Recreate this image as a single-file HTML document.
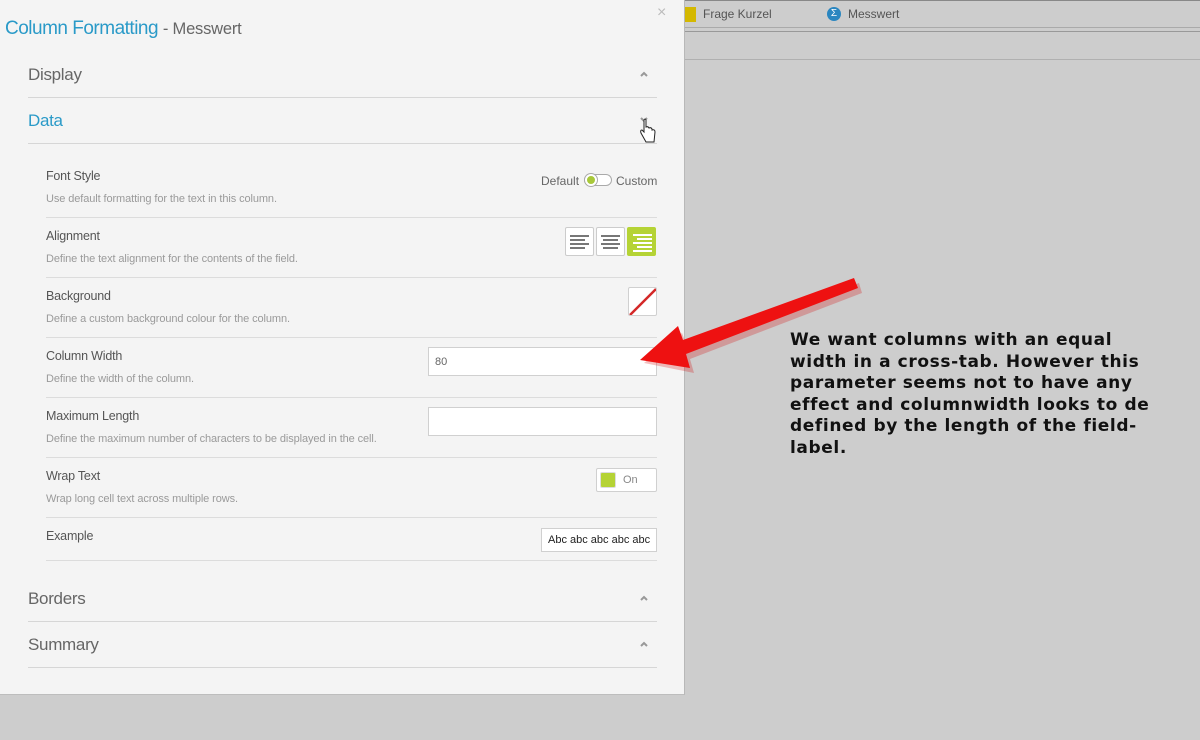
<!DOCTYPE html>
<html><head><meta charset="utf-8"><style>
*{margin:0;padding:0;box-sizing:border-box}
body{width:1200px;height:740px;background:#cdcdcd;position:relative;overflow:hidden;font-family:"Liberation Sans",sans-serif}
.a{position:absolute}
#panel{left:0;top:0;width:685px;height:695px;background:#f4f4f4;border-right:1px solid #b8b8b8;border-bottom:1px solid #bdbdbd}
.sec{position:absolute;left:28px;width:629px;font-size:17px;color:#666;letter-spacing:-0.3px}
.hl{position:absolute;left:28px;width:629px;height:1px;background:#d6d6d6}
.rl{position:absolute;left:46px;width:611px;height:1px;background:#dcdcdc}
.t{position:absolute;left:46px;font-size:12.5px;color:#555;letter-spacing:-0.2px}
.d{position:absolute;left:46px;font-size:11px;color:#9a9a9a;letter-spacing:-0.1px}
.car{position:absolute;left:639px;width:10px;height:8px}
.inp{position:absolute;background:#fff;border:1px solid #d0d0d0}
.al{position:absolute;top:227px;width:29px;height:29px;background:#fff;border:1px solid #ccc;border-radius:2px}
.al i{position:absolute;height:1.5px;background:#777}
</style></head><body>
<div class="a" style="left:685px;top:0;width:515px;height:1px;background:#888"></div>
<div class="a" style="left:685px;top:27px;width:515px;height:1px;background:#aaa"></div>
<div class="a" style="left:685px;top:31px;width:515px;height:1px;background:#999"></div>
<div class="a" style="left:685px;top:59px;width:515px;height:1px;background:#b0b0b0"></div>
<div class="a" style="left:685px;top:7px;width:11px;height:15px;background:#d4b800"></div>
<div class="a" style="left:703px;top:7px;font-size:12px;color:#555">Frage Kurzel</div>
<div class="a" style="left:827px;top:7px;width:14px;height:14px;border-radius:50%;background:#2a86c0;color:#fff;font-size:10px;text-align:center;line-height:14px">Σ</div>
<div class="a" style="left:848px;top:7px;font-size:12px;color:#555">Messwert</div>

<div id="panel" class="a">
<div class="a" style="left:657px;top:4px;font-size:16px;color:#bbb">×</div>
<div class="a" style="left:5px;top:18px;font-size:19px;color:#2a9ac8;letter-spacing:-0.5px">Column Formatting <span style="color:#666;font-size:16.5px;letter-spacing:-0.2px">- Messwert</span></div>
<div class="sec" style="top:65px">Display</div><svg class="car" style="top:70px"><path d="M2 6 L5 3 L8 6" fill="none" stroke="#999" stroke-width="2"/></svg>
<div class="hl" style="top:97px"></div>
<div class="sec" style="top:111px;color:#2a9ac8">Data</div><svg class="car" style="top:116px"><path d="M2 2 L5 5 L8 2" fill="none" stroke="#999" stroke-width="2"/></svg>
<div class="hl" style="top:143px"></div>

<div class="t" style="top:169px">Font Style</div><div class="d" style="top:193px">Use default formatting for the text in this column.</div>
<div class="a" style="left:541px;top:174px;font-size:12px;color:#666">Default</div>
<div class="a" style="left:584px;top:174px;width:28px;height:12px;border:1px solid #aaa;border-radius:6px;background:#fff"></div>
<div class="a" style="left:585px;top:174px;width:12px;height:12px;border-radius:50%;background:#a8c83a;border:2px solid #fff;box-shadow:0 0 0 1px #aaa"></div>
<div class="a" style="left:616px;top:174px;font-size:12px;color:#666">Custom</div>
<div class="rl" style="top:217px"></div>

<div class="t" style="top:229px">Alignment</div><div class="d" style="top:253px">Define the text alignment for the contents of the field.</div>
<div class="al" style="left:565px"><i style="left:4px;top:7px;width:19px"></i><i style="left:4px;top:11px;width:15px"></i><i style="left:4px;top:15px;width:19px"></i><i style="left:4px;top:19px;width:15px"></i></div>
<div class="al" style="left:596px"><i style="left:4px;top:7px;width:19px"></i><i style="left:6px;top:11px;width:15px"></i><i style="left:4px;top:15px;width:19px"></i><i style="left:6px;top:19px;width:15px"></i></div>
<div class="al" style="left:627px;background:#b5d335;border-color:#b5d335"><i style="left:5px;top:6px;width:19px;background:#fff"></i><i style="left:9px;top:10px;width:15px;background:#fff"></i><i style="left:5px;top:14px;width:19px;background:#fff"></i><i style="left:9px;top:18px;width:15px;background:#fff"></i><i style="left:5px;top:22px;width:19px;background:#fff"></i></div>
<div class="rl" style="top:277px"></div>

<div class="t" style="top:289px">Background</div><div class="d" style="top:313px">Define a custom background colour for the column.</div>
<div class="inp" style="left:628px;top:287px;width:29px;height:29px;border-radius:2px;overflow:hidden"><svg width="29" height="29"><line x1="1" y1="27" x2="27" y2="1" stroke="#d42828" stroke-width="2.5"/></svg></div>
<div class="rl" style="top:337px"></div>

<div class="t" style="top:349px">Column Width</div><div class="d" style="top:373px">Define the width of the column.</div>
<div class="inp" style="left:428px;top:347px;width:229px;height:29px;font-size:11px;color:#666;padding:8px 0 0 6px">80</div>
<div class="rl" style="top:397px"></div>

<div class="t" style="top:409px">Maximum Length</div><div class="d" style="top:433px">Define the maximum number of characters to be displayed in the cell.</div>
<div class="inp" style="left:428px;top:407px;width:229px;height:29px"></div>
<div class="rl" style="top:457px"></div>

<div class="t" style="top:469px">Wrap Text</div><div class="d" style="top:493px">Wrap long cell text across multiple rows.</div>
<div class="inp" style="left:596px;top:468px;width:61px;height:24px;border-radius:2px"></div>
<div class="a" style="left:600px;top:472px;width:16px;height:16px;background:#b5d335;border:1px solid #ddd;border-radius:2px"></div>
<div class="a" style="left:623px;top:474px;font-size:11px;color:#888">On</div>
<div class="rl" style="top:517px"></div>

<div class="t" style="top:529px">Example</div>
<div class="inp" style="left:541px;top:528px;width:116px;height:24px;font-size:11px;color:#222;padding:5px 0 0 6px;white-space:nowrap">Abc abc abc abc abc</div>
<div class="rl" style="top:560px"></div>

<div class="sec" style="top:589px">Borders</div><svg class="car" style="top:594px"><path d="M2 6 L5 3 L8 6" fill="none" stroke="#999" stroke-width="2"/></svg>
<div class="hl" style="top:621px"></div>
<div class="sec" style="top:635px">Summary</div><svg class="car" style="top:640px"><path d="M2 6 L5 3 L8 6" fill="none" stroke="#999" stroke-width="2"/></svg>
<div class="hl" style="top:667px"></div>
<svg class="a" style="left:638px;top:118px" width="20" height="28"><path d="M6 2 L6 14 L4 12 Q2 12 3 15 L8 24 L16 24 L17 14 Q17 11 14 12 L14 11 Q13 9 11 10 Q10 8 8 9 L8 2 Q7 0 6 2Z" fill="#fff" stroke="#222" stroke-width="1"/></svg>
</div>

<svg class="a" style="left:620px;top:270px" width="260" height="110">
<path d="M237 10 L65 73 L60 60 L22 90 L72 100 L68 86 L240 20 Z" fill="#d60000" opacity="0.25" transform="translate(2,3)"/>
<path d="M234 8 L63 70 L58 56 L20 90 L70 98 L66 84 L238 18 Z" fill="#ee1111"/>
</svg>
<div class="a" style="left:790px;top:330px;font-family:'DejaVu Sans',sans-serif;font-weight:bold;font-size:17px;letter-spacing:0.6px;line-height:21.6px;color:#111;white-space:pre">We want columns with an equal
width in a cross-tab. However this
parameter seems not to have any
effect and columnwidth looks to de
defined by the length of the field-
label.</div>
</body></html>
